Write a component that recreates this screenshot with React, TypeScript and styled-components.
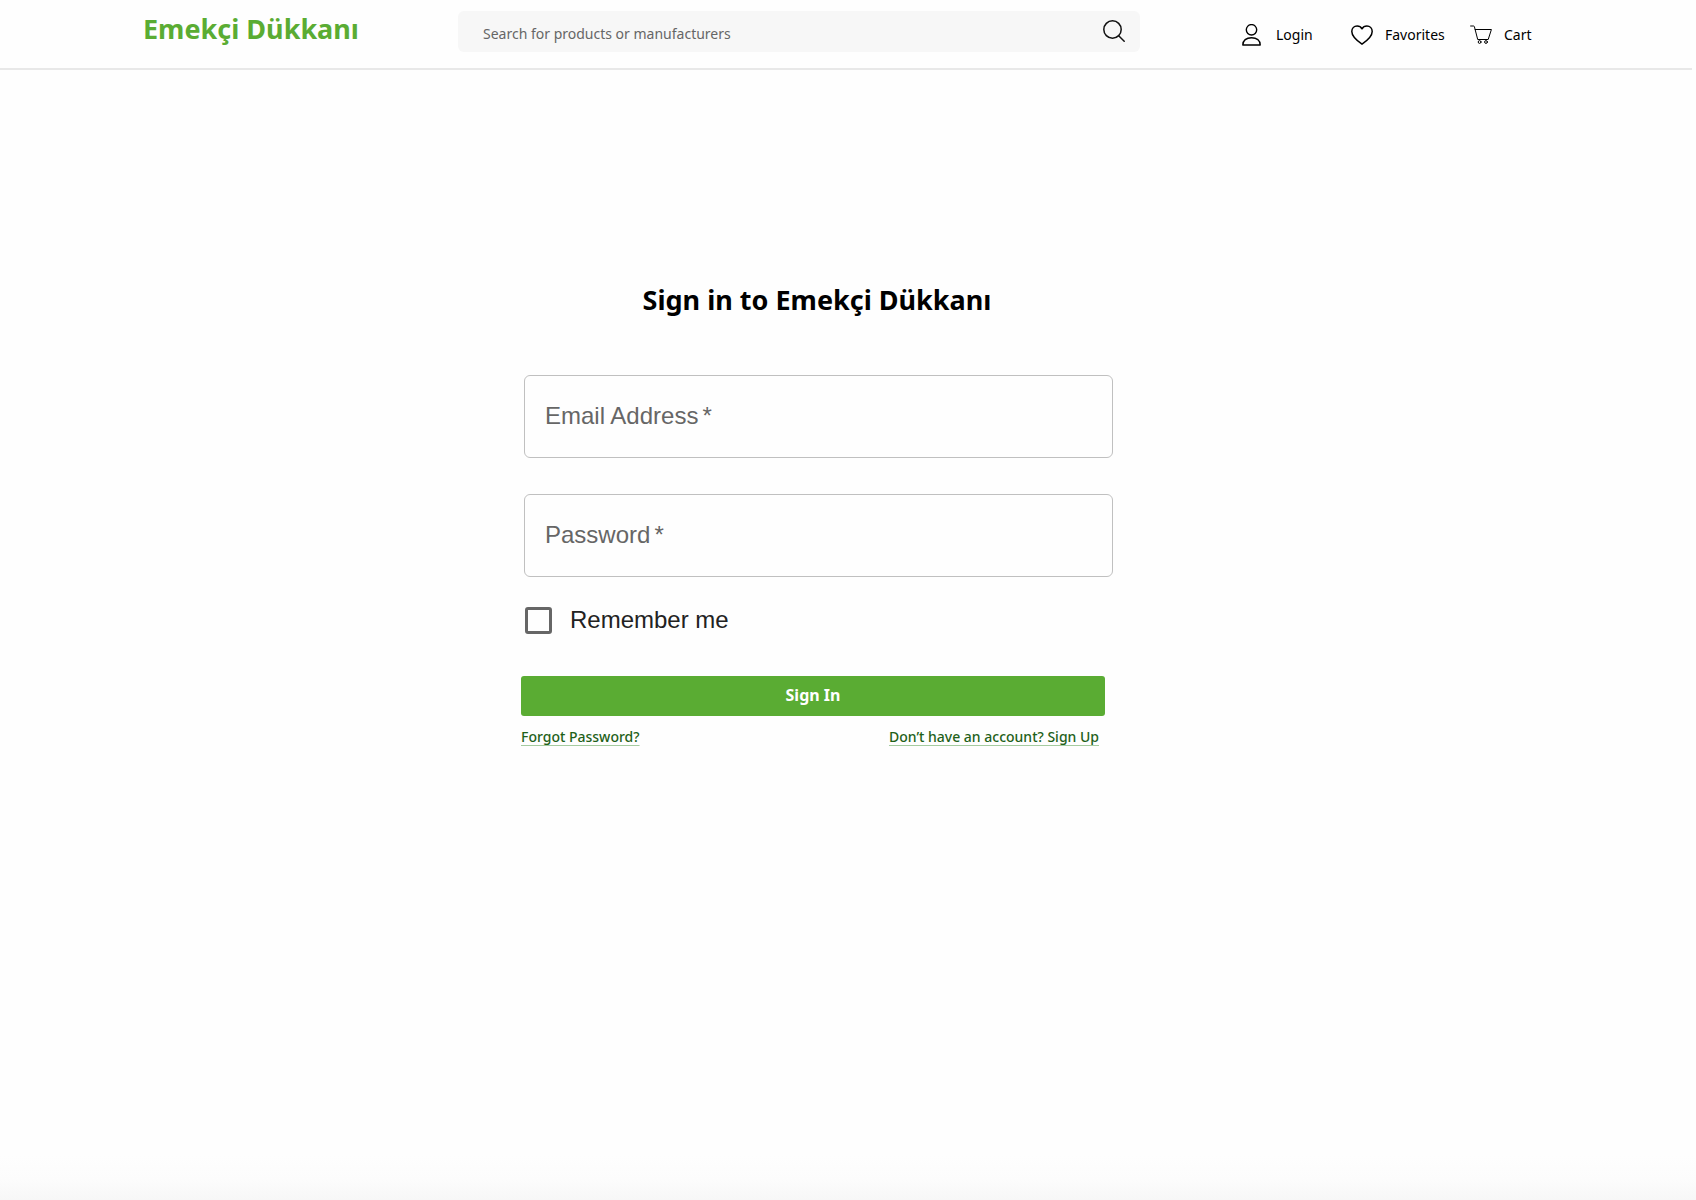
import React from "react";
import styled, { createGlobalStyle } from "styled-components";

const ui = '"Noto Sans", "Open Sans", sans-serif';
const helvetica = '"Liberation Sans", Arial, sans-serif';
const green = "#5aac33";

const GlobalStyle = createGlobalStyle`
  * { box-sizing: border-box; }
  body { margin: 0; background: #fefefe; font-family: ${ui}; color: #000; }
`;

const Page = styled.div`
  min-height: 100vh;
  background: linear-gradient(to top, #f7f7f7 0, #fcfcfc 20px, #fefefe 44px);
`;

const Header = styled.header`
  display: grid;
  grid-template-columns: 213px minmax(240px, 1fr) 290px;
  column-gap: 102px;
  align-items: center;
  height: 70px;
  margin-right: 4px;
  padding: 0 160px 6px 143px;
  border-bottom: 2px solid #e8e8e8;
`;

const Logo = styled.a`
  padding-bottom: 4px;
  color: ${green};
  font-size: 27px;
  line-height: 40px;
  font-weight: 700;
  text-decoration: none;
  white-space: nowrap;
`;

const Search = styled.form`
  display: flex;
  align-items: center;
  height: 41px;
  padding: 0 15px 0 25px;
  border-radius: 6px;
  background: #f7f7f7;
`;

const SearchInput = styled.input`
  flex: 1;
  min-width: 0;
  height: 41px;
  border: 0;
  outline: 0;
  padding: 4px 0 0;
  background: transparent;
  font: 14px/20px ${ui};
  color: #222;
  &::placeholder { color: #666; opacity: 1; }
`;

const SearchButton = styled.button`
  display: flex;
  padding: 0;
  border: 0;
  background: none;
  color: #111;
`;

const Nav = styled.nav`
  display: grid;
  grid-template-columns: 109px 119px auto;
  padding-top: 8px;
`;

const NavLink = styled.a`
  display: flex;
  align-items: center;
  gap: 12px;
  color: #000;
  font-size: 14px;
  line-height: 20px;
  text-decoration: none;
  white-space: nowrap;
`;

const Icon = styled.svg`
  display: block;
  flex: none;
  width: 22px;
  height: 22px;
  fill: none;
  stroke: currentColor;
  stroke-linecap: round;
  stroke-linejoin: round;
`;

const Main = styled.main`
  display: flex;
  justify-content: center;
  padding: 210px 62px 0 0;
`;

const SignInForm = styled.form`
  width: 592px;
`;

const Title = styled.h1`
  margin: 0 0 55px;
  font-size: 27px;
  line-height: 40px;
  font-weight: 700;
  text-align: center;
`;

const Fields = styled.div`
  display: grid;
  gap: 36px;
  padding-left: 3px;
`;

const Field = styled.div`
  display: grid;
  font: 24px/32px ${helvetica};
  & > * { grid-area: 1 / 1; }
`;

const FieldLabel = styled.label`
  align-self: center;
  padding: 0 0 2px 21px;
  color: #666;
  pointer-events: none;
`;

const Required = styled.span`
  padding-left: 4px;
`;

const FieldInput = styled.input`
  width: 100%;
  height: 83px;
  padding: 0 21px;
  border: 1px solid #c0c0c0;
  border-radius: 6px;
  outline: 0;
  background: transparent;
  font: inherit;
`;

const Remember = styled.label`
  display: flex;
  align-items: center;
  gap: 18px;
  margin-top: 27px;
  padding-left: 4px;
  color: #222;
  font: 24px/32px ${helvetica};
`;

const Checkbox = styled.input`
  appearance: none;
  width: 27px;
  height: 27px;
  margin: 0;
  border: 3px solid #666;
  border-radius: 3px;
  &:checked { background: ${green}; }
`;

const Submit = styled.button`
  display: block;
  width: 584px;
  height: 40px;
  margin-top: 40px;
  padding: 0 0 2px;
  border: 0;
  border-radius: 3px;
  background: ${green};
  color: #fff;
  font: 700 16px/24px ${ui};
`;

const Links = styled.div`
  display: flex;
  justify-content: space-between;
  width: 578px;
  margin-top: 11px;
`;

const TextLink = styled.a`
  color: #1f6119;
  font-size: 14px;
  line-height: 20px;
  font-weight: 500;
  text-decoration: underline;
  text-decoration-color: #a5cba0;
  text-decoration-thickness: 1px;
  text-underline-offset: 3px;
`;

const SearchIcon = () => (
  <Icon viewBox="0 0 22 22" strokeWidth="1.5" aria-hidden="true">
    <circle cx="9.5" cy="9.5" r="8.7" />
    <path d="M15.7 15.7 21.2 21.2" />
  </Icon>
);

const UserIcon = () => (
  <Icon viewBox="0 0 22 22" strokeWidth="1.4" aria-hidden="true">
    <circle cx="9.5" cy="5.8" r="5.2" />
    <path d="M.8 21C.8 16.5 4.3 13.7 9.5 13.7S18.2 16.5 18.2 21Z" />
  </Icon>
);

const HeartIcon = () => (
  <Icon viewBox="0 0 22 22" strokeWidth="1.5" aria-hidden="true">
    <path d="M11 20.2C7 17.5.8 12.9.8 7.6.8 4.3 3.2 2 6.1 2 8.3 2 10.1 3.2 11 4.8 11.9 3.2 13.7 2 15.9 2 18.8 2 21.2 4.3 21.2 7.6 21.2 12.9 15 17.5 11 20.2Z" />
  </Icon>
);

const CartIcon = () => (
  <Icon viewBox="0 0 22 22" strokeWidth="1" aria-hidden="true">
    <path d="M.6 2H3.6Q4.2 2 4.4 2.7L7.7 15.5H18.2L21.4 5.5H5.2" />
    <circle cx="9.6" cy="18" r="1.4" />
    <circle cx="16" cy="18" r="1.4" />
  </Icon>
);

export default function App() {
  return (
    <Page>
      <GlobalStyle />
      <Header>
        <Logo href="#">Emekçi Dükkanı</Logo>
        <Search role="search">
          <SearchInput
            aria-label="Search"
            placeholder="Search for products or manufacturers"
          />
          <SearchButton type="button" aria-label="Search">
            <SearchIcon />
          </SearchButton>
        </Search>
        <Nav>
          <NavLink href="#"><UserIcon />Login</NavLink>
          <NavLink href="#"><HeartIcon />Favorites</NavLink>
          <NavLink href="#"><CartIcon />Cart</NavLink>
        </Nav>
      </Header>
      <Main>
        <SignInForm>
          <Title>Sign in to Emekçi Dükkanı</Title>
          <Fields>
            <Field>
              <FieldLabel htmlFor="email">Email Address<Required>*</Required></FieldLabel>
              <FieldInput id="email" type="email" />
            </Field>
            <Field>
              <FieldLabel htmlFor="password">Password<Required>*</Required></FieldLabel>
              <FieldInput id="password" type="password" />
            </Field>
          </Fields>
          <Remember>
            <Checkbox type="checkbox" />
            Remember me
          </Remember>
          <Submit type="button">Sign In</Submit>
          <Links>
            <TextLink href="#">Forgot Password?</TextLink>
            <TextLink href="#">Don’t have an account? Sign Up</TextLink>
          </Links>
        </SignInForm>
      </Main>
    </Page>
  );
}
